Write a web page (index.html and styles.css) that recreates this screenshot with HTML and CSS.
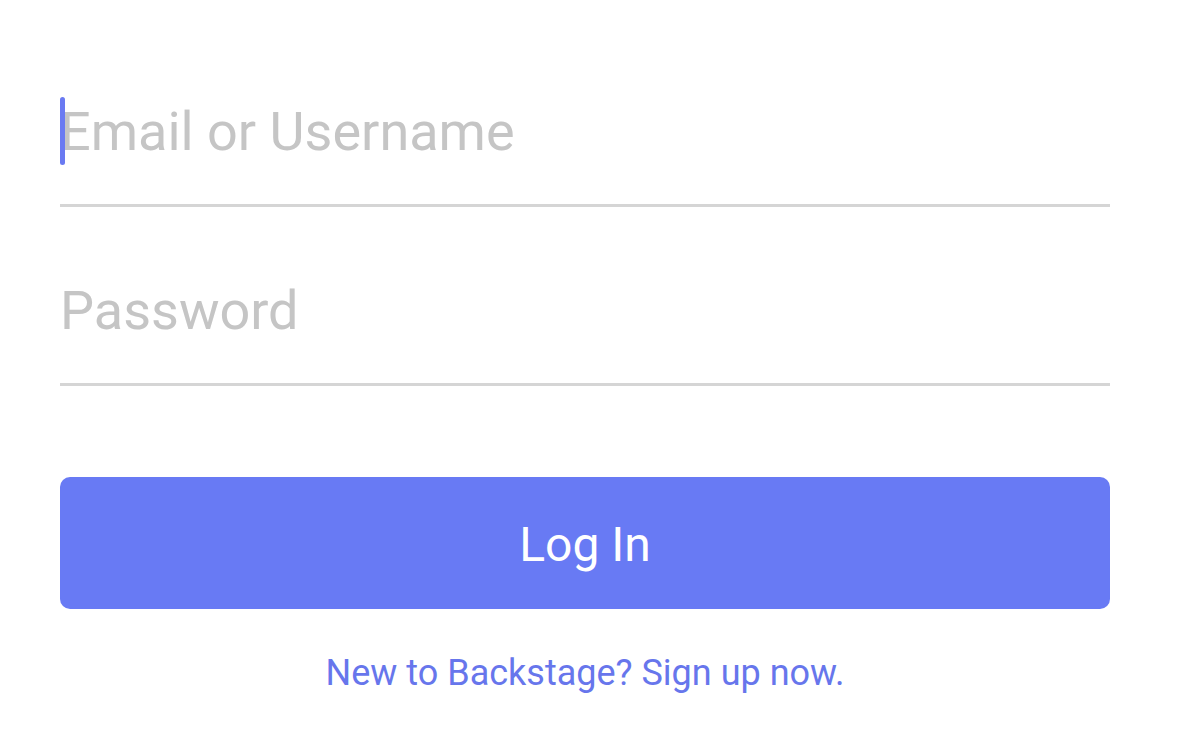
FILE: index.html
```html
<!DOCTYPE html>
<html lang="en">
<head>
<meta charset="utf-8">
<title>Log In</title>
<link rel="stylesheet" href="styles.css">
</head>
<body>
<form class="login">
  <div class="field first">
    <span class="caret"></span>
    <input class="input" type="text" placeholder="Email or Username">
  </div>
  <div class="field">
    <input class="input" type="password" placeholder="Password">
  </div>
  <button class="btn" type="button">Log In</button>
  <a class="signup" href="#">New to Backstage? Sign up now.</a>
</form>
</body>
</html>
```

FILE: styles.css
```css
html, body {
  margin: 0;
  padding: 0;
  background: #ffffff;
}
body {
  font-family: Roboto, "Noto Sans", "Liberation Sans", sans-serif;
}
.login {
  display: flex;
  flex-direction: column;
  padding: 0 70px 0 60px;
}
.field {
  position: relative;
  display: flex;
  padding-bottom: 39px;
  border-bottom: 3px solid #d5d5d5;
}
.field.first {
  padding-top: 97px;
}
.field + .field {
  margin-top: 69px;
}
.input {
  flex: 1;
  border: 0;
  outline: none;
  padding: 0;
  margin: 0;
  height: 68px;
  font-family: inherit;
  font-size: 54px;
  color: #333;
  background: transparent;
}
.input::placeholder {
  color: #c5c5c5;
}
.caret {
  position: absolute;
  left: 0;
  top: 97px;
  width: 5px;
  height: 68px;
  border-radius: 3px;
  background: #6a7af2;
}
.btn {
  margin-top: 91px;
  height: 132px;
  padding: 3px 0 0;
  border: 0;
  border-radius: 10px;
  background: #687af4;
  color: #ffffff;
  font-family: inherit;
  font-size: 48px;
  cursor: pointer;
}
.signup {
  margin-top: 42px;
  align-self: center;
  line-height: 44px;
  font-size: 36px;
  color: #6776ec;
  text-decoration: none;
}
```
